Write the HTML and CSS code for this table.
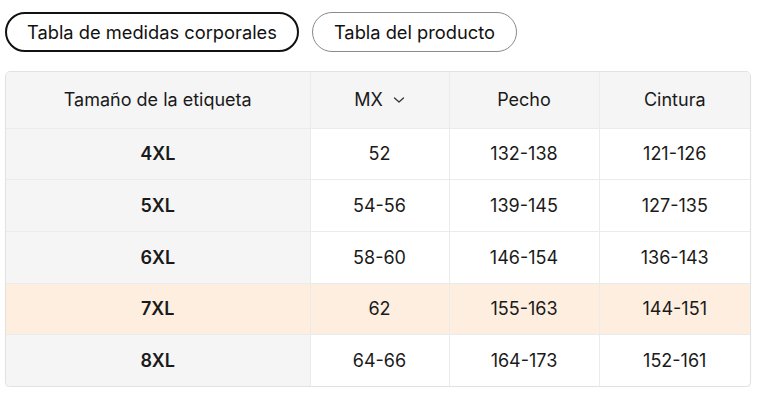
FILE: index.html
```html
<!DOCTYPE html>
<html lang="es">
<head>
<meta charset="utf-8">
<link rel="stylesheet" href="styles.css">
</head>
<body>
<div class="page">
  <div class="tabs">
    <button class="tab active">Tabla de medidas corporales</button>
    <button class="tab">Tabla del producto</button>
  </div>
  <div class="table-wrap">
    <table class="sizes">
      <colgroup>
        <col class="c1"><col class="c2"><col class="c3"><col class="c4">
      </colgroup>
      <thead>
        <tr>
          <th>Tamaño de la etiqueta</th>
          <th><span class="mx">MX <svg class="chev" width="12" height="8" viewBox="0 0 12 8"><path d="M1.5 2 L6 6 L10.5 2" fill="none" stroke="#333" stroke-width="1.3" stroke-linecap="round" stroke-linejoin="round"/></svg></span></th>
          <th>Pecho</th>
          <th>Cintura</th>
        </tr>
      </thead>
      <tbody>
        <tr><td class="size">4XL</td><td>52</td><td>132-138</td><td>121-126</td></tr>
        <tr><td class="size">5XL</td><td>54-56</td><td>139-145</td><td>127-135</td></tr>
        <tr><td class="size">6XL</td><td>58-60</td><td>146-154</td><td>136-143</td></tr>
        <tr class="hl"><td class="size">7XL</td><td>62</td><td>155-163</td><td>144-151</td></tr>
        <tr><td class="size">8XL</td><td>64-66</td><td>164-173</td><td>152-161</td></tr>
      </tbody>
    </table>
  </div>
</div>
</body>
</html>
```

FILE: styles.css
```css
* { box-sizing: border-box; }
html, body { margin: 0; padding: 0; background: #fff; }
body {
  font-family: Inter, "Noto Sans", "Liberation Sans", sans-serif;
  color: #1a1a1a;
}
.page { padding: 12px 0 0 5px; width: 752px; }
.tabs { display: flex; gap: 13px; }
.tab {
  height: 40px;
  border-radius: 20px;
  background: #fff;
  font-family: inherit;
  font-size: 18.3px;
  color: #111;
  padding: 0 21px;
  border: 1px solid #8a8a8a;
  cursor: pointer;
}
.tab.active { border: 2px solid #111; padding: 0 20px; }
.table-wrap {
  margin-top: 19px;
  width: 746px;
  border: 1px solid #e2e2e2;
  border-radius: 5px;
  overflow: hidden;
  box-shadow: 0 1px 1px rgba(0,0,0,0.08);
}
.sizes {
  width: 100%;
  border-collapse: collapse;
  table-layout: fixed;
  font-size: 18px;
}
.c1 { width: 304px; }
.c2 { width: 139px; }
.c3 { width: 150px; }
.sizes th, .sizes td {
  text-align: center;
  border-right: 1px solid #ebebeb;
  border-bottom: 1px solid #ebebeb;
  padding: 0;
}
.sizes th:last-child, .sizes td:last-child { border-right: none; }
.sizes tbody tr:last-child td { border-bottom: none; }
.sizes th {
  height: 56px;
  font-weight: 400;
  background: #f5f5f5;
}
.sizes td { height: 51.7px; }
.sizes td.size { background: #f5f5f5; font-weight: 600; }
.sizes tr.hl td { background: #fdeee0; }
.mx { display: inline-flex; align-items: center; gap: 10px; }
.chev { display: block; }
```
